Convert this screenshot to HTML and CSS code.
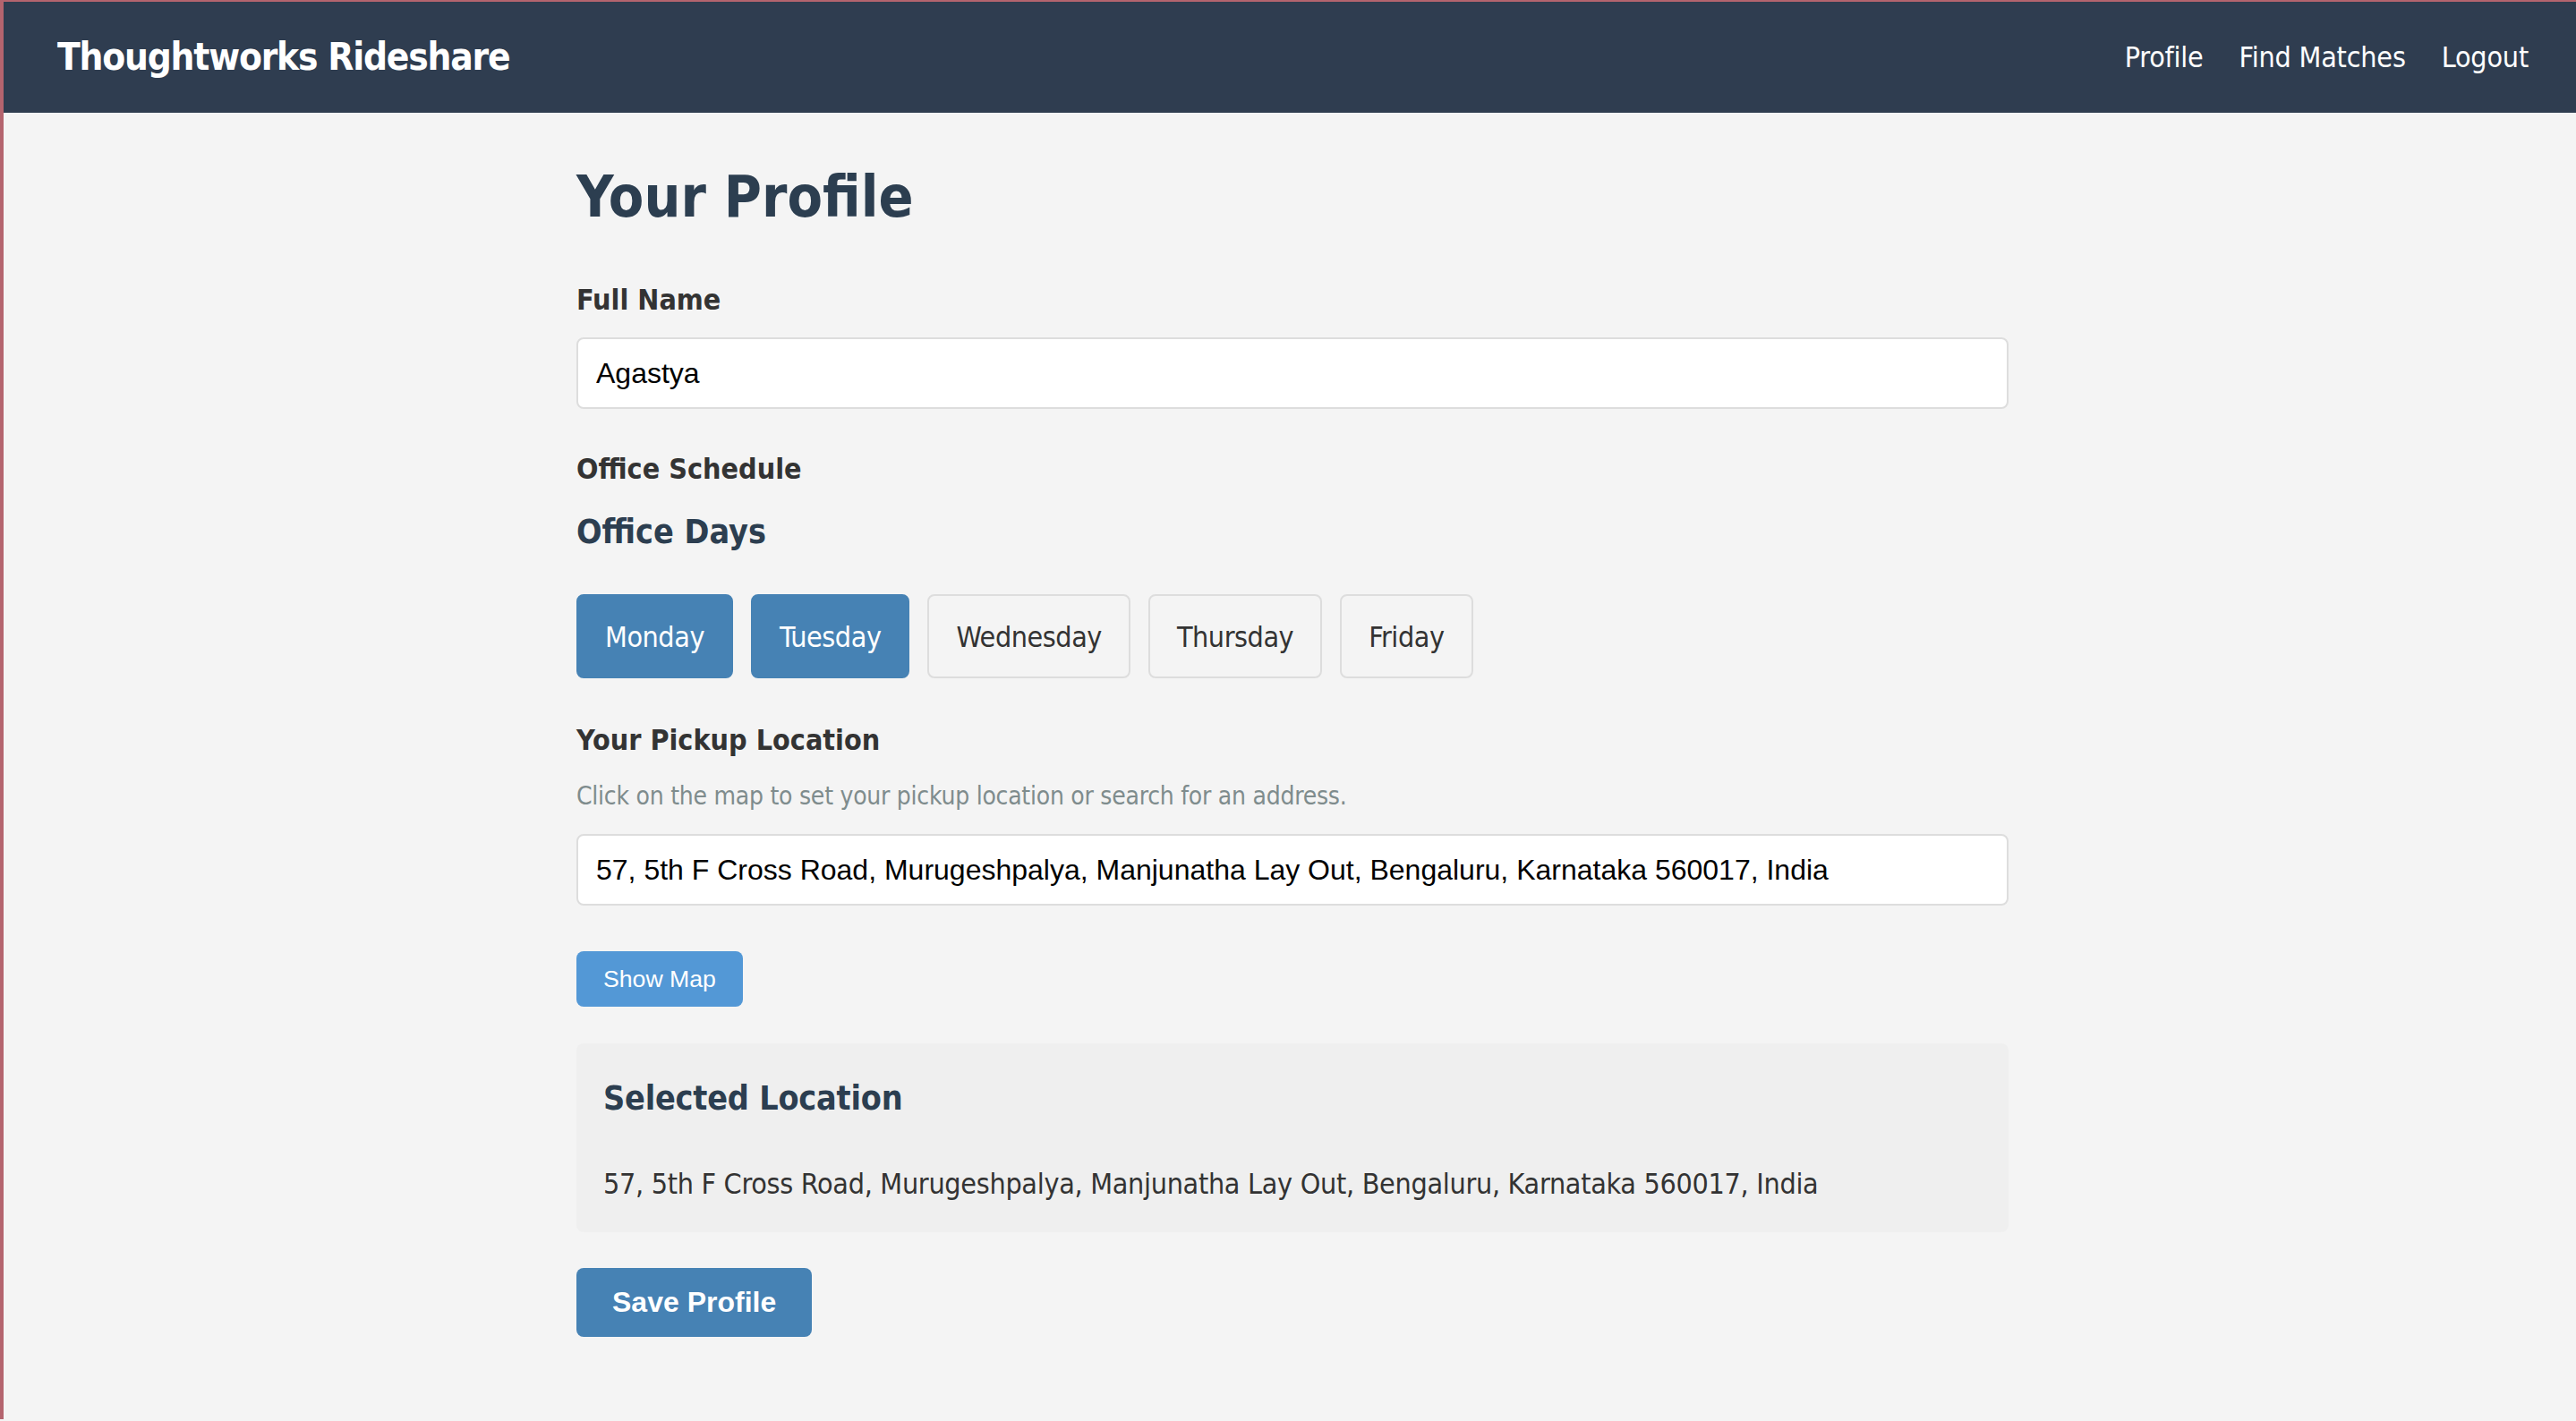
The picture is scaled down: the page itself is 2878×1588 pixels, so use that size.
FILE: index.html
```html
<!DOCTYPE html>
<html lang="en">
<head>
<meta charset="utf-8">
<title>Thoughtworks Rideshare - Profile</title>
<link rel="stylesheet" href="styles.css">
</head>
<body>
<header class="navbar">
  <div class="brand">Thoughtworks Rideshare</div>
  <nav class="nav-links">
    <a href="#" class="nav-link">Profile</a>
    <a href="#" class="nav-link">Find Matches</a>
    <a href="#" class="nav-link">Logout</a>
  </nav>
</header>
<main class="page">
  <div class="container">
    <h1 class="page-title">Your Profile</h1>

    <label class="field-label label-name" for="fullName">Full Name</label>
    <input class="text-input" id="fullName" type="text" value="Agastya">

    <div class="field-label label-schedule">Office Schedule</div>
    <h3 class="sub-title">Office Days</h3>
    <div class="days">
      <button class="day day-active">Monday</button>
      <button class="day day-active">Tuesday</button>
      <button class="day">Wednesday</button>
      <button class="day">Thursday</button>
      <button class="day">Friday</button>
    </div>

    <div class="field-label label-pickup">Your Pickup Location</div>
    <p class="helper">Click on the map to set your pickup location or search for an address.</p>
    <input class="text-input address-input" type="text" value="57, 5th F Cross Road, Murugeshpalya, Manjunatha Lay Out, Bengaluru, Karnataka 560017, India">

    <button class="map-btn">Show Map</button>

    <section class="selected">
      <h3 class="selected-title">Selected Location</h3>
      <p class="selected-address">57, 5th F Cross Road, Murugeshpalya, Manjunatha Lay Out, Bengaluru, Karnataka 560017, India</p>
    </section>

    <button class="save-btn">Save Profile</button>
  </div>
</main>
</body>
</html>
```
FILE: styles.css
```css
html, body {
  margin: 0;
  padding: 0;
}

body {
  background: #f4f4f4;
  border-left: 4px solid #b4646e;
  border-top: 2px solid #b4646e;
  min-height: 1586px;
  box-sizing: border-box;
  font-family: "DejaVu Sans Condensed", "DejaVu Sans", sans-serif;
  font-stretch: condensed;
  color: #333;
}

.navbar {
  height: 124px;
  background: #2f3d50;
  display: flex;
  align-items: center;
  justify-content: space-between;
  padding: 0 53px 0 60px;
}

.brand {
  color: #fff;
  font-weight: bold;
  font-size: 42px;
  line-height: 50px;
  letter-spacing: -1.2px;
}

.nav-links {
  display: flex;
  gap: 40px;
}

.nav-link {
  color: #fff;
  text-decoration: none;
  font-size: 32px;
  line-height: 40px;
  letter-spacing: -0.2px;
}

.page {
  padding-left: 6px;
}

.container {
  width: 1600px;
  margin: 0 auto;
  padding-top: 56px;
  display: flex;
  flex-direction: column;
  align-items: flex-start;
}

.page-title {
  margin: 0;
  font-size: 64px;
  line-height: 76px;
  color: #2c3e50;
  font-weight: bold;
}

.field-label {
  display: block;
  font-size: 32px;
  line-height: 40px;
  font-weight: bold;
  color: #333;
}

.label-name { margin-top: 57px; margin-bottom: 22px; }
.label-schedule { margin-top: 47px; }
.label-pickup { margin-top: 49px; }

.text-input {
  display: block;
  width: 100%;
  height: 80px;
  box-sizing: border-box;
  margin: 0;
  padding: 0 20px;
  border: 2px solid #ddd;
  border-radius: 8px;
  background: #fff;
  font-family: "Liberation Sans", Arial, sans-serif;
  font-size: 32px;
  color: #000;
  outline: none;
}

.sub-title {
  margin: 28px 0 0;
  font-size: 37.4px;
  line-height: 44px;
  font-weight: bold;
  color: #2c3e50;
}

.days {
  display: flex;
  gap: 20px;
  margin-top: 48px;
}

.day {
  font-family: "DejaVu Sans Condensed", "DejaVu Sans", sans-serif;
  font-stretch: condensed;
  font-size: 32px;
  line-height: 38px;
  letter-spacing: -0.45px;
  padding: 27px 30px 25px;
  border: 2px solid #ddd;
  border-radius: 8px;
  background: #f4f4f4;
  color: #333;
  cursor: pointer;
}

.day-active {
  background: #4682b4;
  border-color: #4682b4;
  color: #fff;
}

.helper {
  margin: 26px 0 0;
  font-size: 28px;
  line-height: 34px;
  letter-spacing: -0.25px;
  color: #7f8c8d;
}

.address-input {
  margin-top: 25px;
}

.map-btn {
  margin-top: 51px;
  font-family: "Liberation Sans", Arial, sans-serif;
  font-size: 26.67px;
  line-height: 30px;
  padding: 16px 30px;
  border: none;
  border-radius: 8px;
  background: #5398d6;
  color: #fff;
  cursor: pointer;
}

.selected {
  margin-top: 41px;
  width: 100%;
  box-sizing: border-box;
  height: 211px;
  padding: 30px;
  background: #efefef;
  border-radius: 8px;
}

.selected-title {
  margin: 9px 0 0;
  font-size: 37.4px;
  line-height: 44px;
  font-weight: bold;
  color: #2c3e50;
  letter-spacing: -0.2px;
}

.selected-address {
  margin: 54px 0 0;
  font-size: 32px;
  line-height: 40px;
  letter-spacing: -0.3px;
  color: #333;
}

.save-btn {
  margin-top: 40px;
  font-family: "Liberation Sans", Arial, sans-serif;
  font-weight: bold;
  font-size: 32px;
  line-height: 37px;
  padding: 20px 40px;
  border: none;
  border-radius: 8px;
  background: #4682b4;
  color: #fff;
  cursor: pointer;
}
```
